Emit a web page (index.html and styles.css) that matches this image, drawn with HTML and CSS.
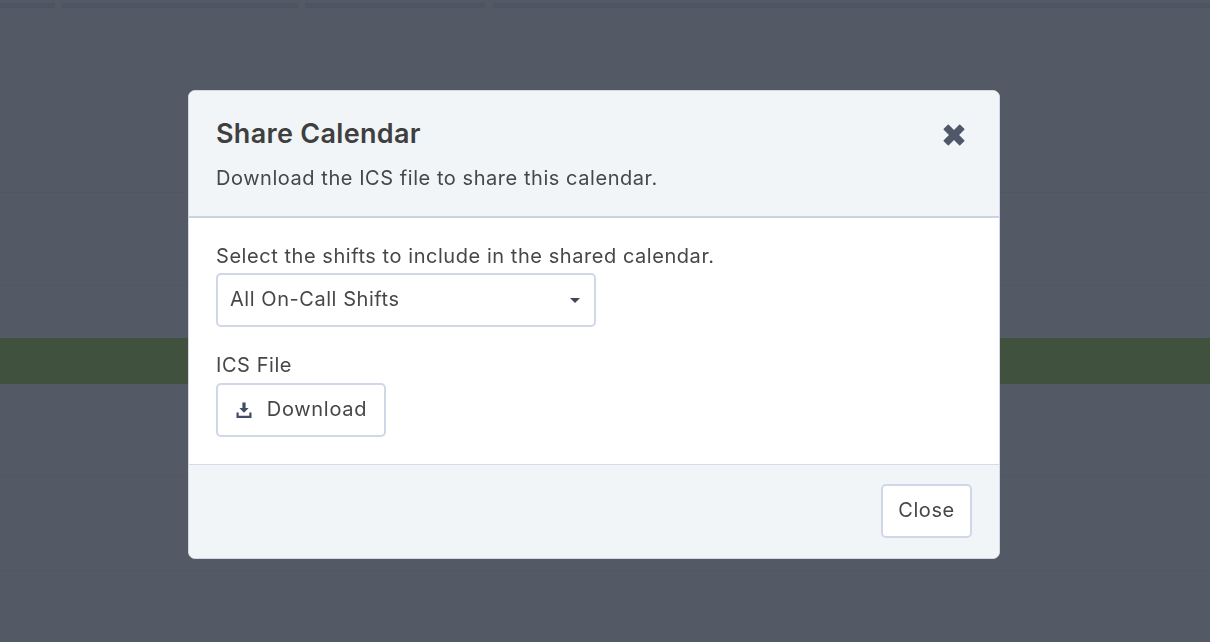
FILE: index.html
```html
<!DOCTYPE html>
<html lang="en">
<head>
<meta charset="utf-8">
<title>Share Calendar</title>
<link rel="stylesheet" href="styles.css">
</head>
<body>
<div class="page">
  <div class="tabs">
    <div class="tab tab-a"></div>
    <div class="tab tab-b"></div>
    <div class="tab tab-c"></div>
    <div class="tab tab-d"></div>
  </div>
  <div class="row row-1"></div>
  <div class="row row-2"></div>
  <div class="row row-3"></div>
  <div class="row row-green"></div>
  <div class="row row-4"></div>
  <div class="row row-5"></div>
  <div class="row row-6"></div>
</div>
<div class="overlay">
  <section class="modal">
    <header class="modal-header">
      <div class="title-row">
        <h1 class="title">Share Calendar</h1>
        <button class="close-x" aria-label="Close">
          <svg width="24" height="24" viewBox="0 0 24 24"><path d="M6.3 2.2 12 7.9l5.7-5.7 4.1 4.1-5.7 5.7 5.7 5.7-4.1 4.1-5.7-5.7-5.7 5.7-4.1-4.1 5.7-5.7-5.7-5.7z" fill="#4f5868" stroke="#4f5868" stroke-width="1.4" stroke-linejoin="round"/></svg>
        </button>
      </div>
      <p class="subtitle">Download the ICS file to share this calendar.</p>
    </header>
    <div class="modal-body">
      <label class="label">Select the shifts to include in the shared calendar.</label>
      <div class="select">
        <span>All On-Call Shifts</span>
        <svg class="caret" width="10" height="5" viewBox="0 0 10 5"><path d="M0 0h10L5 5z" fill="#3c4657"/></svg>
      </div>
      <label class="label label-file">ICS File</label>
      <button class="btn btn-download">
        <svg width="18" height="18" viewBox="0 0 18 18"><path d="M7.4 1.5h3.2v5.6h3L9 11.7 4.4 7.1h3z" fill="#3f4d66"/><path d="M1.5 11.5h2.2v3.2h10.6v-3.2h2.2v5.4h-15z" fill="#3f4d66"/></svg>
        <span>Download</span>
      </button>
    </div>
    <footer class="modal-footer">
      <button class="btn btn-close">Close</button>
    </footer>
  </section>
</div>
</body>
</html>
```
FILE: styles.css
```css
* { box-sizing: border-box; }
html, body { margin: 0; height: 100%; overflow: hidden; }
body {
  background: #535a66;
  font-family: Inter, "Liberation Sans", sans-serif;
  color: #3f3f3f;
}
.page { display: flex; flex-direction: column; height: 642px; padding-top: 3px; }
.tabs { display: flex; gap: 7px; height: 5px; }
.tab { background: #4b5563; }
.tab-a { width: 55px; }
.tab-b { width: 236px; }
.tab-c { width: 180px; }
.tab-d { flex: 1; margin-left: 1px; }
.row { border-bottom: 1px solid #505763; }
.row-1 { height: 185px; }
.row-2 { height: 93px; }
.row-3 { height: 52px; border-bottom: 0; }
.row-green { height: 46px; background: #40513e; border-bottom: 0; }
.row-4 { height: 93px; }
.row-5 { height: 94px; }
.row-6 { flex: 1; border-bottom: 0; }

.overlay { position: fixed; inset: 0; display: flex; justify-content: center; padding: 90px 210px 0 188px; }
.modal {
  width: 812px; height: 469px;
  background: #fff;
  border: 1px solid #d0d7e6;
  border-radius: 7px;
  overflow: hidden;
  display: flex; flex-direction: column;
}
.modal-header {
  height: 127px;
  background: #f1f5f8;
  border-bottom: 2px solid #cbd3e3;
  padding: 23px 27px 0;
}
.title-row { display: flex; justify-content: space-between; align-items: flex-start; }
.title { margin: 0; font-size: 27px; line-height: 40px; font-weight: 600; color: #3f3f3f; letter-spacing: 0.3px; }
.close-x { border: 0; background: none; padding: 0; margin: 9px 6px 0 0; height: 24px; display: block; }
.subtitle { margin: 10px 0 0; font-size: 20px; line-height: 28px; color: #474747; letter-spacing: 0.55px; }
.modal-body { height: 246px; padding: 24px 27px 0; }
.label { display: block; font-size: 20px; line-height: 28px; color: #474747; letter-spacing: 0.55px; }
.select {
  width: 380px; height: 54px; margin-top: 3px;
  display: flex; align-items: center; justify-content: space-between;
  padding: 0 14px 0 12px;
  border: 2px solid #d0d7e6; border-radius: 5px;
  background: #fff; font-size: 20px; color: #474747; letter-spacing: 0.55px;
}
.select span { position: relative; top: -1px; }
.label-file { margin-top: 24px; }
.btn {
  display: inline-flex; align-items: center; justify-content: center;
  background: #fff; border: 2px solid #d0d7e6; border-radius: 5px;
  font-family: inherit; font-size: 20px; color: #474747; padding: 0; letter-spacing: 0.55px;
}
.btn-download { width: 170px; height: 54px; gap: 14px; margin-top: 4px; padding-bottom: 2px; letter-spacing: 0.7px; }
.btn-download svg { position: relative; top: 1px; }
.modal-footer {
  flex: 1;
  background: #f1f5f8;
  border-top: 1px solid #d5dbe8;
  padding: 19px 27px 0;
  display: flex; justify-content: flex-end; align-items: flex-start;
}
.btn-close { width: 91px; height: 54px; padding-bottom: 2px; }
```
